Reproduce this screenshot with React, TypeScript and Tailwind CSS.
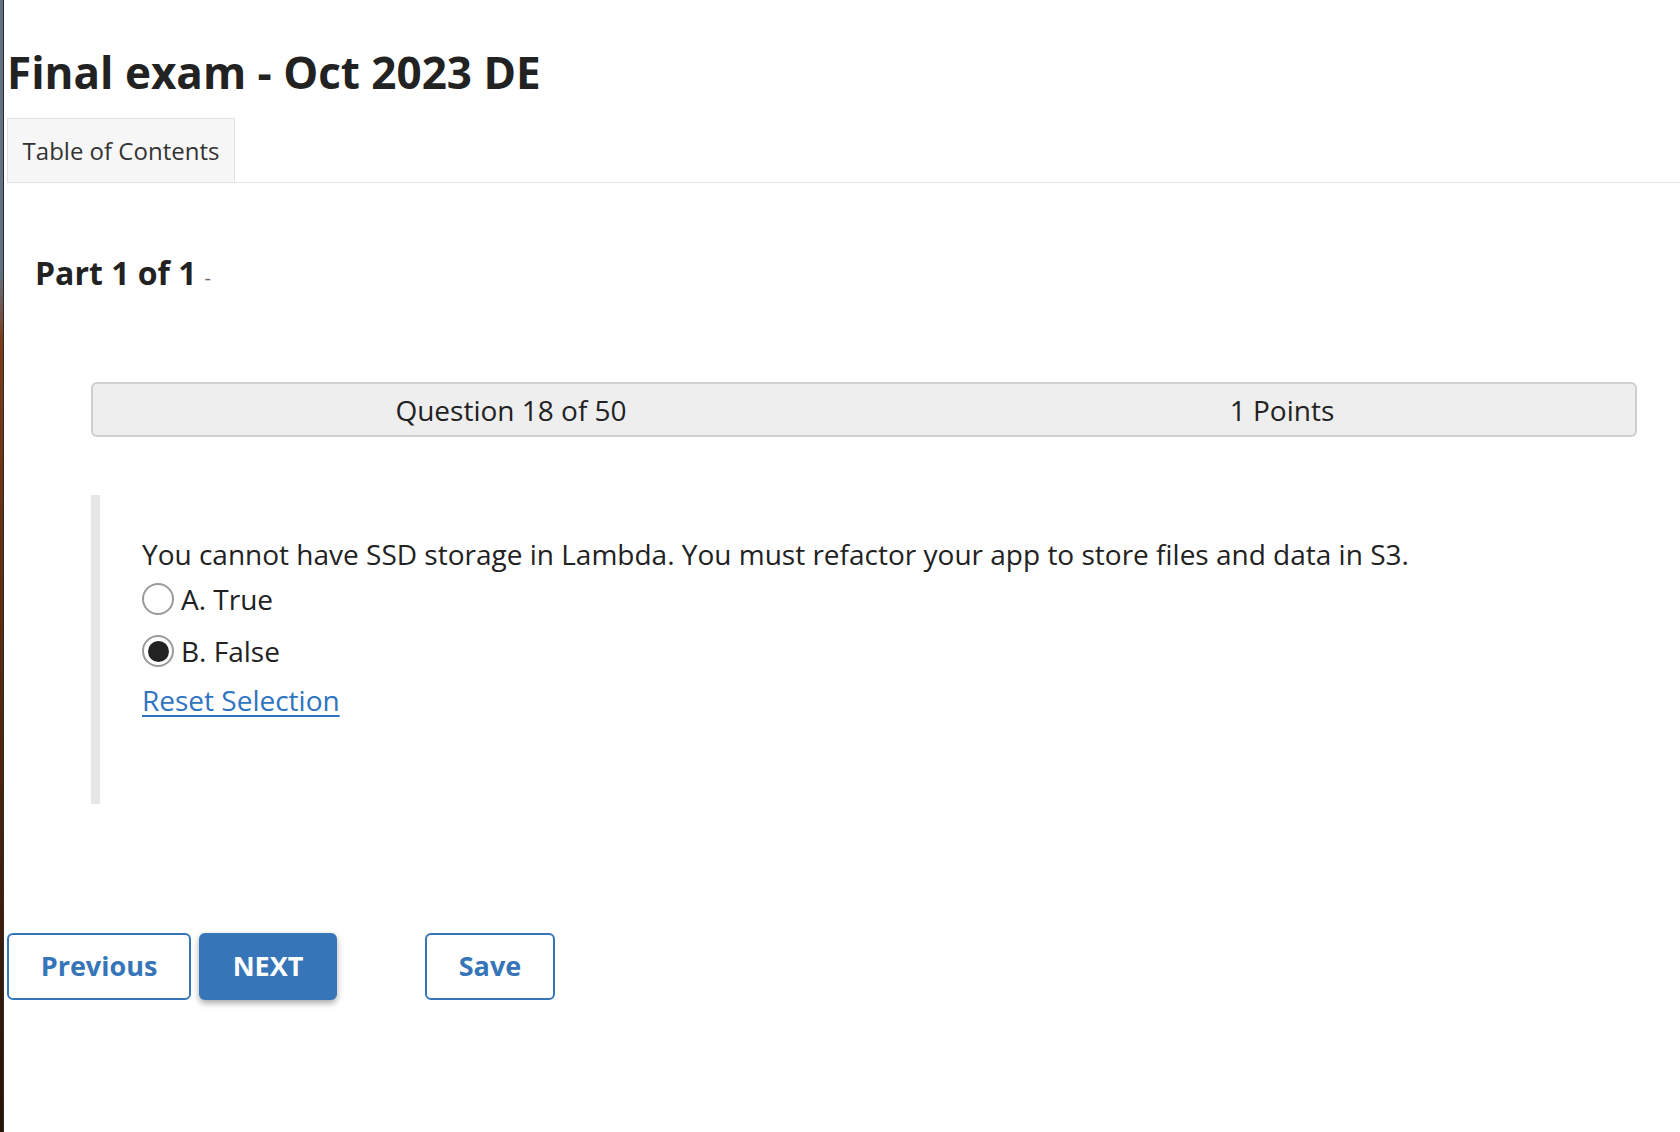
import React from 'react';

const font = "font-['Open_Sans','Noto_Sans',sans-serif]";

function Radio({ checked }: { checked?: boolean }) {
  return (
    <span className="flex h-[32px] w-[32px] items-center justify-center rounded-full border-2 border-[#9a9a9a] bg-white">
      {checked && <span className="h-[21px] w-[21px] rounded-full bg-[#222]" />}
    </span>
  );
}

export default function App() {
  return (
    <div className={`flex min-h-screen bg-white text-[#222] ${font}`}>
      {/* desktop wallpaper peeking on the left */}
      <div className="w-[4px] shrink-0 border-r border-[#2a2a2a] bg-linear-to-b from-[#627184] from-[24%] via-[#7a3c16] via-[30%] to-[#2a1206]" />

      <main className="flex-1 pl-[3px] pt-[46px]">
        <h1 className="text-[44px] font-bold leading-[53px]">Final exam - Oct 2023 DE</h1>

        <div className="mt-[19px] flex border-b border-[#e3e3e3]">
          <div className="flex h-[64px] w-[228px] items-center justify-center border border-b-0 border-[#e3e3e3] bg-[#f7f7f7] text-[24px] text-[#333]">
            Table of Contents
          </div>
        </div>

        <div className="mt-[69px] flex items-baseline pl-[28px]">
          <h2 className="text-[32px] font-bold leading-[42px]">Part 1 of 1</h2>
          <span className="ml-[8px] text-[20px] text-[#666]">-</span>
        </div>

        <div className="ml-[84px] mr-[43px] mt-[88px] flex h-[55px] items-center rounded-[6px] border-2 border-[#cfcfcf] bg-[#eeeeee] text-[28px]">
          <div className="w-[836px] text-center">Question 18 of 50</div>
          <div className="flex-1 text-center">1 Points</div>
        </div>

        <section className="ml-[84px] mt-[58px] h-[309px] border-l-[9px] border-[#e6e6e6] pl-[42px] pt-[41px] text-[28px]">
          <p className="leading-[37px]">
            You cannot have SSD storage in Lambda. You must refactor your app to store files and data in S3.
          </p>
          <label className="mt-[6px] flex h-[40px] items-center">
            <Radio />
            <span className="ml-[7px]">A. True</span>
          </label>
          <label className="mt-[12px] flex h-[40px] items-center">
            <Radio checked />
            <span className="ml-[7px]">B. False</span>
          </label>
          <a className="mt-[11px] block w-fit leading-[37px] text-[#2f74c0] underline underline-offset-[4px]" href="#">
            Reset Selection
          </a>
        </section>

        <div className="mt-[129px] flex items-center">
          <button className="h-[67px] w-[184px] rounded-[6px] border-2 border-[#3575b8] bg-white text-[27px] font-bold text-[#3575b8]">
            Previous
          </button>
          <button className="ml-[8px] h-[67px] w-[138px] rounded-[6px] bg-[#3575b8] text-[27px] font-bold text-white shadow-[0_3px_6px_rgba(0,0,0,0.35)]">
            NEXT
          </button>
          <button className="ml-[88px] h-[67px] w-[130px] rounded-[6px] border-2 border-[#3575b8] bg-white text-[27px] font-bold text-[#3575b8]">
            Save
          </button>
        </div>
      </main>
    </div>
  );
}
